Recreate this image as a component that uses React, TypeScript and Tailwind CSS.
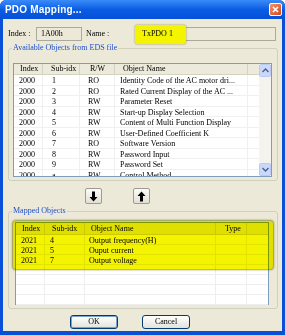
import type { ReactNode } from "react";

const available = [
  ["2000", "1", "RO", "Identity Code of the AC motor dri..."],
  ["2000", "2", "RO", "Rated Current Display of the AC ..."],
  ["2000", "3", "RW", "Parameter Reset"],
  ["2000", "4", "RW", "Start-up Display Selection"],
  ["2000", "5", "RW", "Content of Multi Function Display"],
  ["2000", "6", "RW", "User-Defined Coefficient K"],
  ["2000", "7", "RO", "Software Version"],
  ["2000", "8", "RW", "Password Input"],
  ["2000", "9", "RW", "Password Set"],
  ["2000", "a", "RW", "Control Method"],
];

const mapped = [
  ["2021", "4", "Output frequency(H)"],
  ["2021", "5", "Ouput current"],
  ["2021", "7", "Output voltage"],
];

function GroupBox({ label, className, children }: { label: string; className: string; children: ReactNode }) {
  return (
    <fieldset className={`rounded-[3px] border border-[#d0d0bf] ${className}`}>
      <legend className="ml-[3px] px-[1px] text-[8px] leading-[10px] text-[#1c4fd0]">{label}</legend>
      {children}
    </fieldset>
  );
}

function ScrollBtn({ up }: { up?: boolean }) {
  return (
    <div className="flex h-[13px] w-[12px] items-center justify-center rounded-[2px] border border-[#b9cbf3] bg-[#c9d8fb]">
      <svg width="7" height="5" viewBox="0 0 7 5">
        <path
          d={up ? "M0.5 4 L3.5 1 L6.5 4" : "M0.5 1 L3.5 4 L6.5 1"}
          fill="none"
          stroke="#4d6185"
          strokeWidth="1.4"
        />
      </svg>
    </div>
  );
}

function ArrowBtn({ up }: { up?: boolean }) {
  return (
    <button className="flex h-[16px] w-[17px] items-center justify-center rounded-[2px] border border-[#9c9c90] bg-gradient-to-b from-[#fbfbf9] to-[#e2e0d4]">
      <svg width="9" height="11" viewBox="0 0 9 11">
        {up ? (
          <path d="M3 10.5 V5 H0.5 L4.5 0.5 L8.5 5 H6 V10.5 Z" fill="#000" />
        ) : (
          <path d="M3 0.5 V6 H0.5 L4.5 10.5 L8.5 6 H6 V0.5 Z" fill="#000" />
        )}
      </svg>
    </button>
  );
}

function DlgButton({ label, def }: { label: string; def?: boolean }) {
  return (
    <button
      className={`h-[14px] w-[48px] rounded-[3px] border border-[#003c74] bg-gradient-to-b from-[#ffffff] to-[#e3e3db] text-[8px] leading-none text-black ${
        def ? "shadow-[inset_0_0_0_1px_#7da2ce]" : ""
      }`}
    >
      {label}
    </button>
  );
}

export default function App() {
  return (
    <div className="flex h-[335px] w-[285px] flex-col overflow-hidden rounded-t-[6px] bg-[#0a4fd8] font-['Liberation_Serif',serif] text-black">
      <div className="flex h-[19px] shrink-0 items-center justify-between bg-gradient-to-b from-[#3a8cf8] via-[#0a5ce4] to-[#0650d8] pl-[5px] pr-[3px]">
        <span className="font-['Liberation_Sans',sans-serif] text-[10px] font-bold tracking-[0.2px] text-white">
          PDO Mapping...
        </span>
        <div className="flex h-[13px] w-[13px] items-center justify-center rounded-[2px] border border-white bg-gradient-to-br from-[#f0946c] to-[#d4441c]">
          <svg width="7" height="7" viewBox="0 0 7 7">
            <path d="M1 1 L6 6 M6 1 L1 6" stroke="#fff" strokeWidth="1.6" />
          </svg>
        </div>
      </div>

      <div className="mx-[3px] mb-[4px] flex flex-1 flex-col bg-[#ece9d8]">
        <div className="mt-[8px] flex h-[14px] items-center pl-[5px] text-[8px]">
          <span className="w-[28px]">Index :</span>
          <div className="flex h-[14px] w-[46px] items-center border border-[#a9a99c] pl-[4px]">1A00h</div>
          <span className="ml-[4px] w-[49px]">Name :</span>
          <div className="relative flex h-[14px] w-[141px] items-center border border-[#a9a99c]">
            <div className="absolute -left-[1px] -top-[3px] h-[19px] w-[51px] rounded-[2px] bg-[#f4f400] shadow-[0_0_2px_rgba(120,120,0,0.8)]" />
            <span className="relative pl-[6px]">TxPDO 1</span>
          </div>
        </div>

        <GroupBox label="Available Objects from EDS file" className="mt-[2px] ml-[5px] mr-[4px] pb-[3px]">
          <div className="ml-[4px] mr-[5px] mt-[10px] flex h-[114px] overflow-hidden border border-[#7f9db9] bg-white text-[8px]">
            <div className="flex-1 overflow-hidden">
              <div className="flex h-[11px] items-center border-b border-[#d6d2c2] bg-[#ebeadb]">
                <span className="w-[29px] border-r border-[#d6d2c2] pl-[6px]">Index</span>
                <span className="w-[37px] border-r border-[#d6d2c2] pl-[8px]">Sub-idx</span>
                <span className="w-[35px] border-r border-[#d6d2c2] pl-[10px]">R/W</span>
                <span className="w-[133px] border-r border-[#d6d2c2] pl-[8px]">Object Name</span>
              </div>
              {available.map((r, i) => (
                <div key={i} className="flex h-[10.5px] items-center border-b border-[#f0f0f0]">
                  <span className="h-full w-[29px] border-r border-[#f0f0f0] pl-[5px]">{r[0]}</span>
                  <span className="h-full w-[37px] border-r border-[#f0f0f0] pl-[9px]">{r[1]}</span>
                  <span className="h-full w-[35px] border-r border-[#f0f0f0] pl-[8px]">{r[2]}</span>
                  <span className="h-full w-[133px] whitespace-nowrap border-r border-[#f0f0f0] pl-[5px]">{r[3]}</span>
                </div>
              ))}
            </div>
            <div className="flex w-[12px] flex-col justify-between bg-[#f4f3ee]">
              <ScrollBtn up />
              <ScrollBtn />
            </div>
          </div>
        </GroupBox>

        <div className="mt-[7px] flex h-[16px] pl-[82px]">
          <ArrowBtn />
          <div className="w-[31px]" />
          <ArrowBtn up />
        </div>

        <GroupBox label="Mapped Objects" className="mt-[2px] ml-[5px] mr-[4px] pb-[3px]">
          <div className="relative ml-[6px] mr-[8px] mt-[6px] h-[83px] border border-[#7f9db9] bg-white text-[8px]">
            <div className="flex h-[12px] items-center border-b border-[#d6d2c2] bg-[#ebeadb]">
              <span className="w-[29px] border-r border-[#d6d2c2] pl-[6px]">Index</span>
              <span className="w-[40px] border-r border-[#d6d2c2] pl-[7px]">Sub-idx</span>
              <span className="w-[131px] border-r border-[#d6d2c2] pl-[6px]">Object Name</span>
              <span className="w-[31px] border-r border-[#d6d2c2] pl-[9px]">Type</span>
            </div>
            {[...mapped, ["", "", ""], ["", "", ""], ["", "", ""], ["", "", ""]].map((r, i) => (
              <div key={i} className="flex h-[10px] items-center border-b border-[#eeeeee]">
                <span className="h-full w-[29px] border-r border-[#eeeeee] pl-[5px]">{r[0]}</span>
                <span className="h-full w-[40px] border-r border-[#eeeeee] pl-[5px]">{r[1]}</span>
                <span className="h-full w-[131px] border-r border-[#eeeeee] pl-[4px]">{r[2]}</span>
                <span className="h-full w-[31px] border-r border-[#eeeeee]" />
              </div>
            ))}
            <div className="absolute -left-[3px] -top-[2px] h-[48px] w-[260px] rounded-[3px] bg-[#f4f400] mix-blend-multiply shadow-[0_0_2px_1px_rgba(120,120,0,0.7)]" />
          </div>
        </GroupBox>

        <div className="mt-[6px] flex gap-[24px] pl-[67px]">
          <DlgButton label="OK" def />
          <DlgButton label="Cancel" />
        </div>
      </div>
    </div>
  );
}
